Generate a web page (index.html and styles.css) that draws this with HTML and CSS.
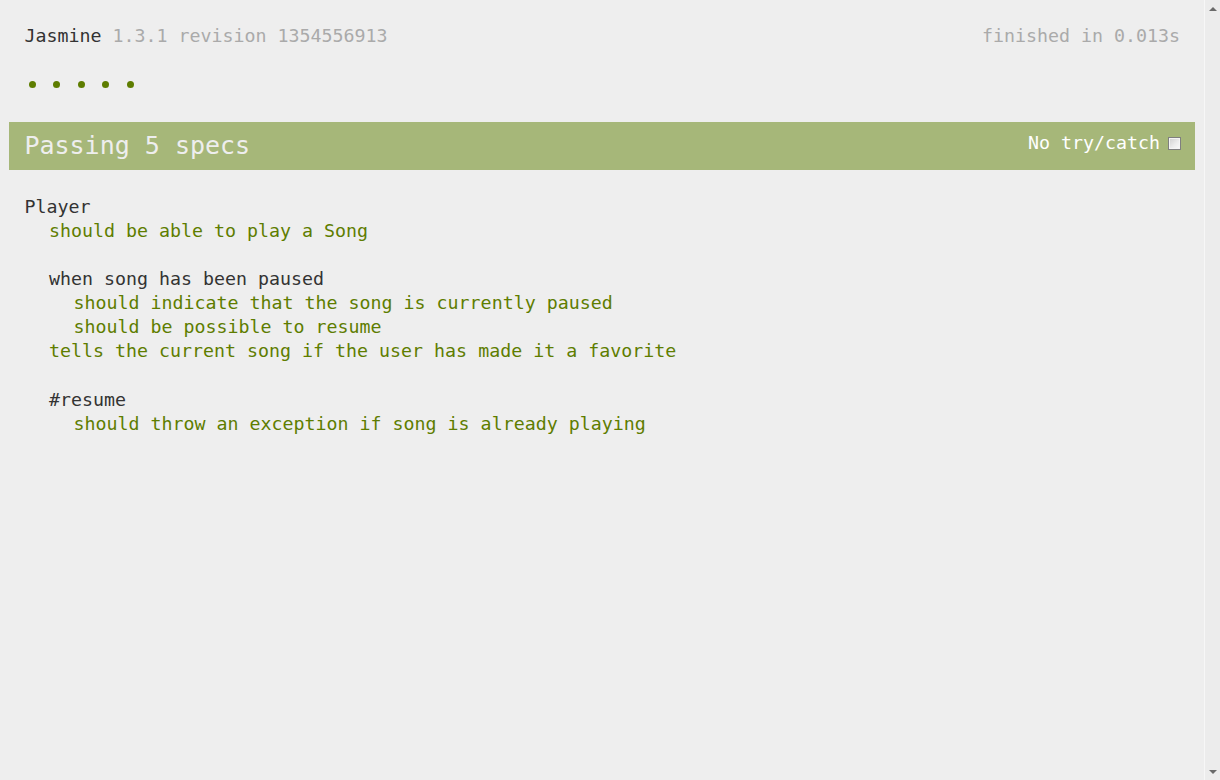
FILE: index.html
```html
<!DOCTYPE html>
<html>
<head>
<meta charset="utf-8">
<title>Jasmine Spec Runner</title>
<link rel="stylesheet" href="styles.css">
</head>
<body>
<div class="page">
  <div class="reporter">
    <div class="banner">
      <span class="title">Jasmine <span class="version">1.3.1 revision 1354556913</span></span>
      <span class="duration">finished in 0.013s</span>
    </div>
    <ul class="symbol-summary">
      <li class="passed"></li>
      <li class="passed"></li>
      <li class="passed"></li>
      <li class="passed"></li>
      <li class="passed"></li>
    </ul>
    <div class="bar passing">
      <span class="bar-text">Passing 5 specs</span>
      <span class="exceptions">No try/catch <span class="checkbox"></span></span>
    </div>
    <div class="summary">
      <div class="suite top">
        <div class="desc">Player</div>
        <div class="spec">should be able to play a Song</div>
        <div class="suite">
          <div class="desc">when song has been paused</div>
          <div class="spec">should indicate that the song is currently paused</div>
          <div class="spec">should be possible to resume</div>
        </div>
        <div class="spec">tells the current song if the user has made it a favorite</div>
        <div class="suite last">
          <div class="desc">#resume</div>
          <div class="spec">should throw an exception if song is already playing</div>
        </div>
      </div>
    </div>
  </div>
</div>
<div class="scrollbar">
  <span class="arrow up"></span>
  <span class="arrow down"></span>
</div>
</body>
</html>
```

FILE: styles.css
```css
html, body {
  height: 100%;
}
body {
  margin: 0;
  background: #eeeeee;
  display: flex;
  overflow: hidden;
}
.page {
  flex: 1;
  padding: 0 9px;
  min-width: 0;
}
.reporter {
  font-family: "DejaVu Sans Mono", "Liberation Mono", monospace;
  font-size: 18.3px;
  line-height: 24px;
  color: #333333;
}
.banner {
  margin-top: 24px;
  padding: 0 15px 0 15.4px;
  display: flex;
  justify-content: space-between;
  height: 24px;
}
.version, .duration {
  color: #aaaaaa;
}
.symbol-summary {
  list-style: none;
  margin: 24px 0 0;
  padding: 0 0 0 19.8px;
  display: flex;
  height: 24px;
  align-items: center;
}
.symbol-summary li {
  width: 24.5px;
  height: 24px;
  display: flex;
  align-items: center;
}
.symbol-summary li.passed::before {
  content: "";
  width: 7px;
  height: 7px;
  border-radius: 50%;
  background: #5e7d00;
}
.bar {
  margin-top: 26px;
  height: 48px;
  display: flex;
  justify-content: space-between;
  padding: 0 14px 0 15.4px;
}
.passing {
  background: #a6b779;
}
.bar-text {
  font-size: 25px;
  line-height: 48px;
  color: #eeeeee;
}
.exceptions {
  color: #ffffff;
  margin-top: 9px;
  line-height: 24px;
  height: 24px;
  display: flex;
  align-items: center;
}
.checkbox {
  display: inline-block;
  width: 11px;
  height: 11px;
  margin-left: 8px;
  border: 1px solid #7f7f7f;
  background: linear-gradient(135deg, #cfcfcf 0%, #ebebeb 55%, #fbfbfb 100%);
  box-shadow: inset 0 0 0 1px #f4f4f4;
}
.summary {
  margin-top: 25px;
  padding-left: 15.4px;
}
.suite {
  margin-top: 24px;
}
.suite.top {
  margin-top: 0;
}
.suite.last {
  margin-top: 25px;
}
.suite .suite,
.spec {
  margin-left: 24.5px;
}
.desc {
  color: #333333;
}
.spec {
  color: #5e7d00;
}
.scrollbar {
  width: 16px;
  flex: none;
  height: 100%;
  background: #ececec;
  border-left: 1px solid #f7f7f7;
  display: flex;
  flex-direction: column;
  justify-content: space-between;
  align-items: center;
  padding: 7px 0 6px;
  box-sizing: border-box;
}
.arrow {
  width: 0;
  height: 0;
  border-left: 4px solid transparent;
  border-right: 4px solid transparent;
}
.arrow.up {
  border-bottom: 4px solid #6a6a6a;
}
.arrow.down {
  border-top: 4px solid #6a6a6a;
}
```
